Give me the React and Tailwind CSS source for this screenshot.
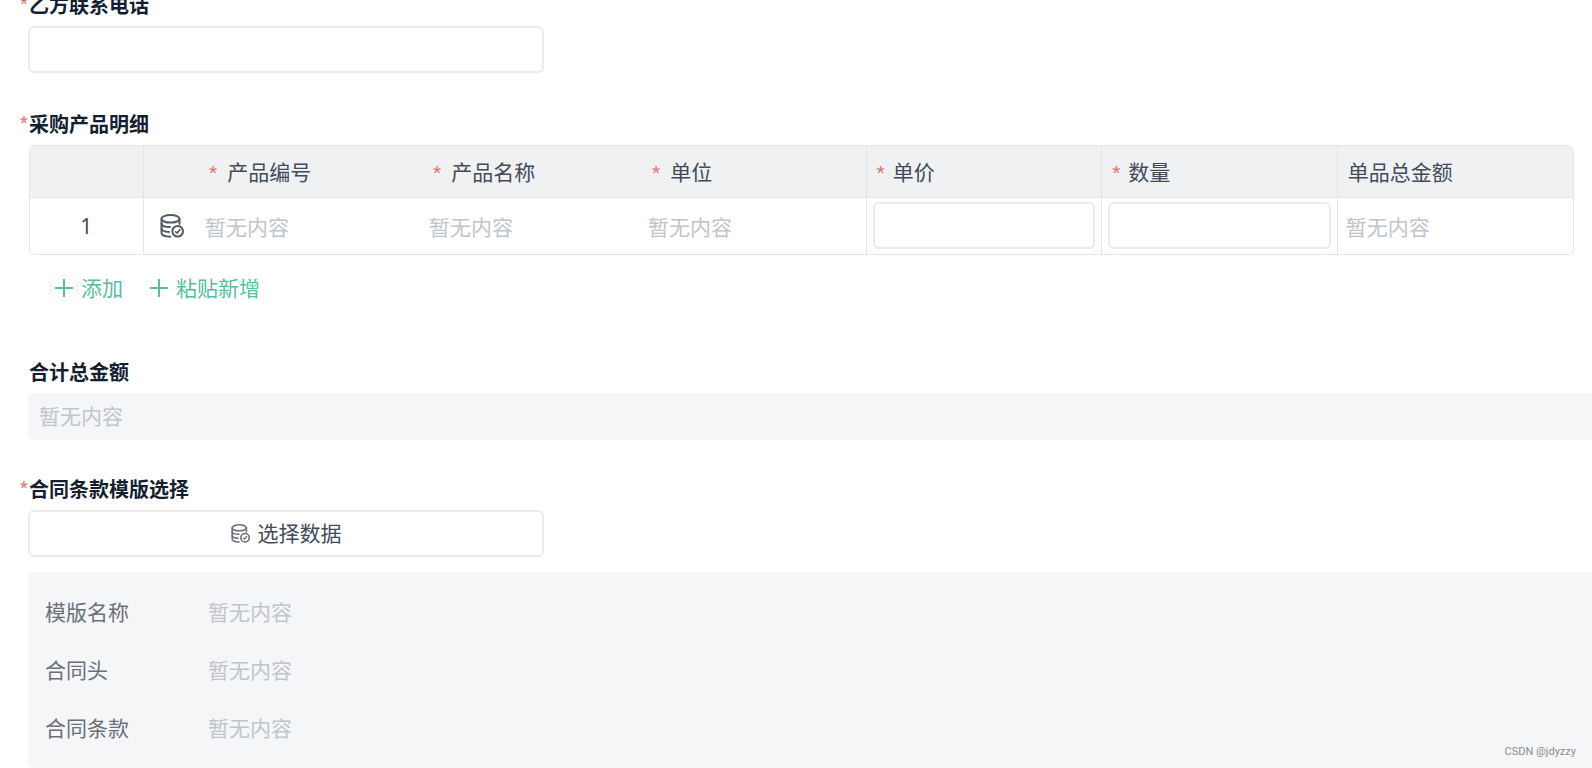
function DataIcon({ className }) {
  return (
    <svg
      className={className}
      viewBox="0 0 24 24"
      fill="none"
      stroke="currentColor"
      strokeWidth="2"
      strokeLinecap="round"
      aria-hidden="true"
    >
      <ellipse cx="10.5" cy="4.800" rx="9" ry="3.800" />
      <path d="M1.500 5v14c0 2 3.600 3.600 8.800 3.700" />
      <path d="M19.500 5v5" />
      <path d="M1.500 9.800c0 1.800 3.500 3.200 8.500 3.200" />
      <path d="M1.500 14.500c0 1.800 3.500 3.200 7.500 3.400" />
      <circle cx="17.700" cy="17.300" r="5.300" />
      <path d="M15.700 17.800l1.500 1.200 2.600-3.300" strokeWidth="1.700" />
    </svg>
  );
}

function PlusIcon() {
  return (
    <svg className="size-5" viewBox="0 0 20 20" stroke="currentColor" strokeWidth="2" aria-hidden="true">
      <path d="M1 9h18M10 0v18" />
    </svg>
  );
}

function Star({ className = "" }) {
  return <span className={`font-normal text-[#e0706c] ${className}`}>*</span>;
}

function FieldTitle({ as: Tag = "div", required, children, ...rest }) {
  return (
    <Tag className="mb-2 flex h-6 items-center text-[20px] leading-6 font-bold text-[#141e31]" {...rest}>
      <span className="w-[9px] shrink-0 self-start leading-5">{required && <Star />}</span>
      {children}
    </Tag>
  );
}

function Empty() {
  return <span className="text-[#c0c4cc]">暂无内容</span>;
}

const boxClass = "h-[47px] rounded-md border-2 border-[#ebebed] bg-white px-3 outline-none";

const details = ["模版名称", "合同头", "合同条款"];

export default function App() {
  return (
    <main className="flex min-h-screen flex-col overflow-hidden bg-white pl-5 font-['Liberation_Sans','Noto_Sans_CJK_SC',sans-serif] text-[21px] leading-7 text-[#434b5a]">
      <section className="-mt-1.5">
        <FieldTitle as="label" htmlFor="phone" required>
          乙方联系电话
        </FieldTitle>
        <input id="phone" type="tel" className={`${boxClass} ml-2 w-[516px] max-w-full`} />
      </section>

      <section className="mt-10">
        <FieldTitle as="h2" required>
          采购产品明细
        </FieldTitle>
        <div className="mr-[18px] ml-[9px] overflow-hidden rounded-md border border-[#e3e5e8]">
          <table className="w-full table-fixed border-collapse text-left">
            <colgroup>
              <col className="w-[113px]" />
              <col className="w-[58px]" />
              <col className="w-[224px]" />
              <col className="w-[219px]" />
              <col className="w-[222px]" />
              <col />
              <col />
              <col />
            </colgroup>
            <thead className="bg-[#f0f1f3]">
              <tr className="h-[51px] border-b border-[#e3e5e8] [&>th]:pt-1 [&>th]:font-normal">
                <th className="border-r border-[#e3e5e8]" aria-label="序号" />
                <th aria-label="操作" />
                <th className="pl-2">
                  <Star className="mr-2.5" />
                  产品编号
                </th>
                <th className="pl-2">
                  <Star className="mr-2.5" />
                  产品名称
                </th>
                <th className="border-r border-[#e3e5e8] pl-2">
                  <Star className="mr-2.5" />
                  单位
                </th>
                <th className="border-r border-[#e3e5e8] pl-2.5">
                  <Star className="mr-2" />
                  单价
                </th>
                <th className="border-r border-[#e3e5e8] pl-2.5">
                  <Star className="mr-2" />
                  数量
                </th>
                <th className="pl-2.5">单品总金额</th>
              </tr>
            </thead>
            <tbody>
              <tr className="h-[57px]">
                <td className="border-r border-[#e3e5e8] text-center font-['Noto_Sans',sans-serif]">1</td>
                <td>
                  <button type="button" aria-label="选择产品" className="mx-auto block text-[#545b67]">
                    <DataIcon className="size-6" />
                  </button>
                </td>
                <td className="pt-1 pl-1"><Empty /></td>
                <td className="pt-1 pl-1"><Empty /></td>
                <td className="border-r border-[#e3e5e8] pt-1 pl-1"><Empty /></td>
                <td className="border-r border-[#e3e5e8] px-1.5">
                  <input aria-label="单价" className={`${boxClass} block w-full`} />
                </td>
                <td className="border-r border-[#e3e5e8] px-1.5">
                  <input aria-label="数量" className={`${boxClass} block w-full`} />
                </td>
                <td className="pt-1 pl-2"><Empty /></td>
              </tr>
            </tbody>
          </table>
        </div>
        <div className="mt-5 ml-[34px] flex gap-[26px] text-[#54bfa3]">
          <button type="button" className="flex items-center gap-[7px]">
            <PlusIcon />
            添加
          </button>
          <button type="button" className="flex items-center gap-[7px]">
            <PlusIcon />
            粘贴新增
          </button>
        </div>
      </section>

      <section className="mt-[58px]">
        <FieldTitle as="h2">合计总金额</FieldTitle>
        <div className="ml-2 flex h-[47px] items-center rounded-l-md bg-[#f5f6f8] pl-[11px]">
          <Empty />
        </div>
      </section>

      <section className="mt-[38px] flex flex-1 flex-col">
        <FieldTitle as="h2" required>
          合同条款模版选择
        </FieldTitle>
        <button
          type="button"
          className={`${boxClass} ml-2 flex w-[516px] max-w-full items-center justify-center gap-2`}
        >
          <DataIcon className="size-[19px] text-[#6b717c]" />
          选择数据
        </button>
        <div className="relative mt-[15px] ml-2 flex-1 rounded-l-md bg-[#f5f6f8] pt-[27px] pl-[17px]">
          <dl className="flex flex-col gap-[30px]">
            {details.map((name) => (
              <div key={name} className="flex">
                <dt className="w-[163px] text-[#6b6f78]">{name}</dt>
                <dd><Empty /></dd>
              </div>
            ))}
          </dl>
          <span className="absolute right-4 bottom-2 font-['Roboto',sans-serif] text-[11px] leading-4 text-[#8c8c8c]">CSDN @jdyzzy</span>
        </div>
      </section>
    </main>
  );
}
